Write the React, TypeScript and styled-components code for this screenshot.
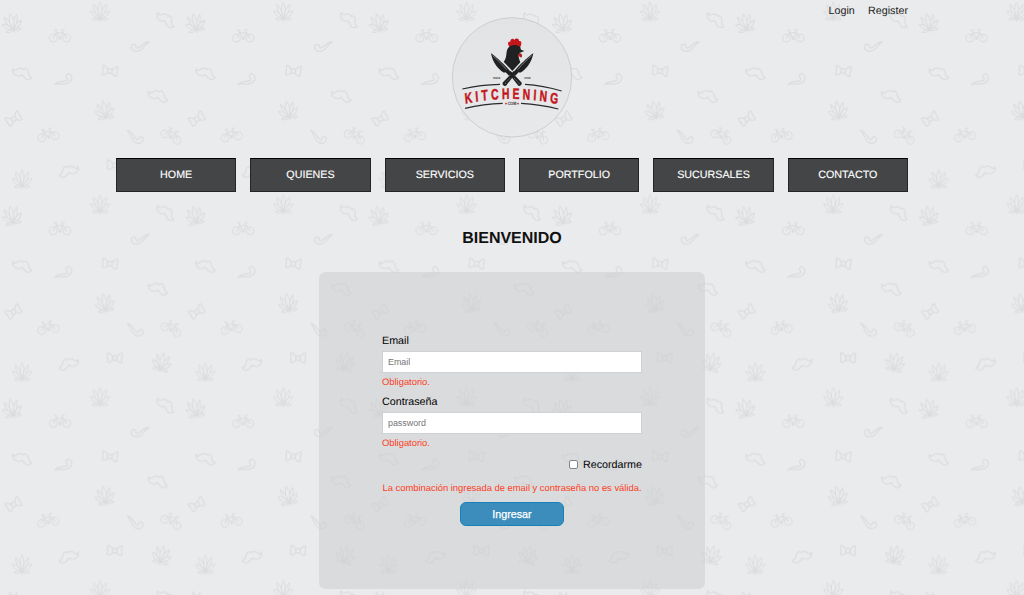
import React from "react";
import styled, { createGlobalStyle } from "styled-components";

const GlobalStyle = createGlobalStyle`
  *, *::before, *::after { box-sizing: border-box; }
  html, body { margin: 0; height: 100%; overflow: hidden; }
  body {
    background: #e9ebed;
    color: #000;
    font-family: "Liberation Sans", Helvetica, Arial, sans-serif;
    font-size: 10.72px;
    line-height: 1.15;
    text-rendering: geometricPrecision;
  }
`;

const Page = styled.div`
  position: relative;
  height: 595px;
  overflow: hidden;
`;

const Wallpaper = styled.svg`
  position: absolute;
  inset: 0;
  width: 100%;
  height: 100%;
`;

const Container = styled.div`
  position: relative;
  display: flex;
  flex-direction: column;
  align-items: center;
  width: 792px;
  margin: 0 auto;
`;

const TopLinks = styled.nav`
  align-self: flex-end;
  display: flex;
  gap: 13.3px;
  height: 16px;
  padding-top: 5px;
`;

const TopLink = styled.a`
  color: #1c1c1c;
  text-decoration: none;
`;

const Logo = styled.svg`
  display: block;
  width: 122px;
  height: 123px;
`;

const MainNav = styled.nav`
  display: grid;
  grid-template-columns: repeat(6, 120.3px);
  justify-content: space-between;
  width: 100%;
  margin-top: 19.4px;
`;

const NavItem = styled.a`
  display: flex;
  align-items: center;
  justify-content: center;
  height: 33.6px;
  background: #444547;
  border: 1px solid #242527;
  border-top-color: #000;
  color: #fff;
  -webkit-text-stroke: 0.15px #fff;
  text-decoration: none;
`;

const Title = styled.h1`
  margin: 38px 0 0;
  font-size: 16px;
  line-height: 18px;
  font-weight: 700;
  color: #111;
`;

const Panel = styled.form`
  display: flex;
  flex-direction: column;
  align-items: center;
  width: 386px;
  height: 317.5px;
  margin-top: 24px;
  padding: 62px 63px 0;
  border-radius: 6.5px;
  background: rgba(203, 204, 205, 0.5);
`;

const Field = styled.div`
  display: flex;
  flex-direction: column;
  width: 260px;
  height: 61px;
`;

const Label = styled.label`
  height: 17px;
  line-height: 14px;
`;

const Input = styled.input`
  width: 100%;
  height: 22px;
  padding: 0 5px;
  border: 1px solid #cfd1d4;
  border-radius: 0;
  background: #fff;
  font-family: inherit;
  font-size: 8.89px;
  &::placeholder { color: #757575; opacity: 1; }
`;

const ErrorText = styled.p<{ $top: number }>`
  margin: ${(p) => p.$top}px 0 0;
  color: #fa3e1f;
  font-size: 9.38px;
  line-height: 11px;
  white-space: nowrap;
`;

const Remember = styled.label`
  align-self: flex-end;
  display: flex;
  align-items: center;
  gap: 5px;
  height: 13px;
  margin-top: 3px;
`;

const Checkbox = styled.input`
  appearance: none;
  width: 9px;
  height: 9px;
  margin: 0 0 2px;
  border: 1px solid #858585;
  border-radius: 2px;
  background: #fff;
`;

const Submit = styled.button`
  width: 104px;
  height: 24px;
  margin-top: 8px;
  padding: 0;
  border: 1px solid #1481bb;
  border-radius: 6px;
  background: #3d8dbc;
  color: #fff;
  -webkit-text-stroke: 0.25px #fff;
  font-family: inherit;
  font-size: 10.72px;
`;

type Kind = "leaf" | "stache" | "bike" | "pipe" | "bow";
interface Doodle {
  kind: Kind;
  x: number;
  y: number;
  turn: number;
  flip?: boolean;
}

const doodles: Doodle[] = [
  { kind: "leaf", x: 100, y: 12, turn: 0 },
  { kind: "leaf", x: 12, y: 23.3, turn: -12 },
  { kind: "stache", x: 165.3, y: 20, turn: 18 },
  { kind: "bike", x: 60, y: 35.7, turn: 0 },
  { kind: "pipe", x: 140, y: 46.5, turn: 0 },
  { kind: "stache", x: 22, y: 73.7, turn: 0 },
  { kind: "pipe", x: 64.2, y: 81, turn: -48, flip: true },
  { kind: "bow", x: 110, y: 71, turn: 6 },
  { kind: "stache", x: 157.7, y: 96.3, turn: 0 },
  { kind: "leaf", x: 104.7, y: 110.7, turn: -11 },
  { kind: "bow", x: 13.7, y: 119, turn: -32 },
  { kind: "bike", x: 48, y: 134.5, turn: -9 },
  { kind: "pipe", x: 134.7, y: 137.3, turn: 16, flip: true },
  { kind: "bike", x: 172, y: 135, turn: 27 },
  { kind: "leaf", x: 161.7, y: 170, turn: 13 },
  { kind: "bow", x: 114.7, y: 165.3, turn: 2 },
  { kind: "stache", x: 69, y: 171.6, turn: 0, flip: true },
  { kind: "leaf", x: 22, y: 179.6, turn: 0 },
];

const shapes: Record<Kind, React.ReactNode> = {
  leaf: (
    <path
      strokeWidth="2.9"
      d="M0 20V29 M0 20C-7 4-8-16 0-30C8-16 7 4 0 20Z M-1 19C-13 7-20-6-19-23C-8-13-3 0-1 19Z M1 19C13 7 20-6 19-23C8-13 3 0 1 19Z M-2 20C-14 17-25 10-29-3C-16-2-7 7-2 20Z M2 20C14 17 25 10 29-3C16-2 7 7 2 20Z M-2 21C-9 16-19 17-24 22C-16 26-8 26-2 21Z M2 21C9 16 19 17 24 22C16 26 8 26 2 21Z"
    />
  ),
  stache: (
    <path d="M-27-15C-26-9-21-8-16-12C-10-18-1-19 3-13C9-18 16-15 18-8C20-1 21 11 30 10C28 17 18 20 11 15C4 10 4 4-1 3C-6 7-15 8-21 3C-27-1-30-8-27-15Z" />
  ),
  bike: (
    <path
      strokeWidth="3.2"
      d="M-32 7a11.5 11.5 0 1 0 23 0a11.5 11.5 0 1 0-23 0 M9 7a11.5 11.5 0 1 0 23 0a11.5 11.5 0 1 0-23 0 M-20 7L-11-9L0 8L9-9H-11 M20 7L9-9L5-17M5-17L14-18 M-11-9L-13-16M-17-17H-9 M-3 8a3 3 0 1 0 6 0a3 3 0 1 0-6 0"
    />
  ),
  pipe: (
    <path d="M-26-2C-25-8-14-8-13-4C-12 0-13 5-9 5C2 4 8-14 27-14C14-9 8 13-7 14C-20 16-28 9-26-2Z" />
  ),
  bow: (
    <path d="M-6-5C-11-8-16-18-22-15C-25-9-18-3-22 9C-23 17-12 14-6 6 M6-5C11-8 16-18 22-15C25-9 18-3 22 9C23 17 12 14 6 6 M-7 0a7 7 0 1 0 14 0a7 7 0 1 0-14 0" />
  ),
};

const Background = () => (
  <Wallpaper aria-hidden="true">
    <defs>
      <pattern id="doodles" width="183.33" height="192.75" patternUnits="userSpaceOnUse">
        <g fill="none" stroke="#dadcde" strokeWidth="3.7" strokeLinejoin="round" strokeLinecap="round">
          {doodles.map((d) =>
            [0, -183.33].map((dx) => (
              <g
                key={`${d.x}-${d.y}-${dx}`}
                transform={`translate(${d.x + dx} ${d.y}) rotate(${d.turn}) scale(${d.flip ? -0.3333 : 0.3333} .3333)`}
              >
                {shapes[d.kind]}
              </g>
            ))
          )}
        </g>
      </pattern>
    </defs>
    <rect width="100%" height="100%" fill="url(#doodles)" />
  </Wallpaper>
);

const Knife = () => (
  <g>
    <path d="M138 130C149 137 171 157 187 174L200 189L192 197L182 187C176 189 172 185 165 179C150 166 142 150 138 130Z" fill="#202123" />
    <path d="M143 137C155 147 171 162 185 179" fill="none" stroke="#a2a4a5" strokeWidth="2" />
    <path d="M190 189L197 183L229 217C233 222 226 231 220 227Z" fill="#202123" />
    <path d="M209 206L211 208M215 212L217 214M221 219L223 221" stroke="#ddd" strokeWidth="2.5" />
  </g>
);

const Brand = () => (
  <Logo viewBox="18 18 366 369" role="img" aria-label="Kitchening">
    <defs>
      <linearGradient id="disc" x1="0" y1="0" x2="0" y2="1">
        <stop offset="0" stopColor="#e1e3e5" />
        <stop offset="1" stopColor="#e8e9eb" />
      </linearGradient>
      <path id="arch" d="M88 281Q289 251 491 283" />
    </defs>
    <circle cx="201" cy="202" r="179" fill="url(#disc)" stroke="#c6c8ca" strokeWidth="2.5" />
    <path d="M193 110C187 102 188 93 196 96C195 87 204 83 208 90C213 82 223 86 222 93C230 91 231 99 226 111L219 116L198 116Z" fill="#c3161c" />
    <path d="M222 130C231 129 233 137 230 142C224 144 220 138 222 130Z" fill="#c3161c" />
    <path d="M188 116C196 102 218 102 226 112L228 119L238 123L225 128C218 133 221 144 226 157L202 183L176 155C187 143 182 126 188 116Z" fill="#202123" />
    <Knife />
    <g transform="matrix(-1 0 0 1 403 0)">
      <Knife />
    </g>
    <g fill="none" stroke="#292a2c" strokeWidth="3.4">
      <path d="M52 237Q108 224 165 223" />
      <path d="M240 223Q294 226 350 243" />
      <path d="M60 295Q116 282 173 280" />
      <path d="M228 280Q286 283 340 297" />
    </g>
    <g transform="scale(.69 1)">
      <text
        fill="#c3161c"
        stroke="#c3161c"
        strokeWidth="1.4"
        fontFamily="Liberation Sans, Arial, sans-serif"
        fontWeight="700"
        fontSize="45"
      >
        <textPath href="#arch" textLength="404" lengthAdjust="spacing">KITCHENING</textPath>
      </text>
    </g>
    <g fill="#333" fontFamily="Liberation Sans, Arial, sans-serif" fontWeight="700">
      <text x="144" y="206" fontSize="9" textLength="22" lengthAdjust="spacingAndGlyphs">SINCE</text>
      <text x="238" y="206" fontSize="9" textLength="19" lengthAdjust="spacingAndGlyphs">2009</text>
      <text x="188" y="286" fontSize="14" textLength="26" lengthAdjust="spacingAndGlyphs">COM</text>
    </g>
    <circle cx="183" cy="281" r="2.4" fill="#c3161c" />
    <circle cx="219" cy="281" r="2.4" fill="#c3161c" />
  </Logo>
);

const sections = ["HOME", "QUIENES", "SERVICIOS", "PORTFOLIO", "SUCURSALES", "CONTACTO"];

export default function App() {
  return (
    <>
      <GlobalStyle />
      <Page>
        <Background />
        <Container>
          <TopLinks>
            <TopLink>Login</TopLink>
            <TopLink>Register</TopLink>
          </TopLinks>
          <Brand />
          <MainNav>
            {sections.map((name) => (
              <NavItem key={name}>{name}</NavItem>
            ))}
          </MainNav>
          <Title>BIENVENIDO</Title>
          <Panel>
            <Field>
              <Label htmlFor="email">Email</Label>
              <Input id="email" type="email" placeholder="Email" />
              <ErrorText $top={4}>Obligatorio.</ErrorText>
            </Field>
            <Field>
              <Label htmlFor="password">Contraseña</Label>
              <Input id="password" type="password" placeholder="password" />
              <ErrorText $top={4}>Obligatorio.</ErrorText>
            </Field>
            <Remember>
              <Checkbox type="checkbox" />
              Recordarme
            </Remember>
            <ErrorText $top={11}>La combinación ingresada de email y contraseña no es válida.</ErrorText>
            <Submit type="button">Ingresar</Submit>
          </Panel>
        </Container>
      </Page>
    </>
  );
}
